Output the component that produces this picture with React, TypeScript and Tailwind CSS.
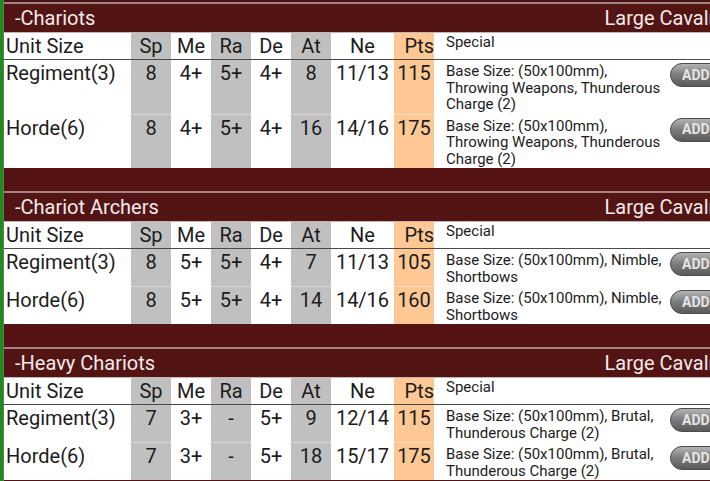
type Row = {
  size: string;
  sp: string;
  me: string;
  ra: string;
  de: string;
  at: string;
  ne: string;
  pts: string;
  special: string;
};

type Unit = { name: string; type: string; rows: Row[] };

const units: Unit[] = [
  {
    name: "-Chariots",
    type: "Large Cavalry",
    rows: [
      { size: "Regiment(3)", sp: "8", me: "4+", ra: "5+", de: "4+", at: "8", ne: "11/13", pts: "115", special: "Base Size: (50x100mm), Throwing Weapons, Thunderous Charge (2)" },
      { size: "Horde(6)", sp: "8", me: "4+", ra: "5+", de: "4+", at: "16", ne: "14/16", pts: "175", special: "Base Size: (50x100mm), Throwing Weapons, Thunderous Charge (2)" },
    ],
  },
  {
    name: "-Chariot Archers",
    type: "Large Cavalry",
    rows: [
      { size: "Regiment(3)", sp: "8", me: "5+", ra: "5+", de: "4+", at: "7", ne: "11/13", pts: "105", special: "Base Size: (50x100mm), Nimble, Shortbows" },
      { size: "Horde(6)", sp: "8", me: "5+", ra: "5+", de: "4+", at: "14", ne: "14/16", pts: "160", special: "Base Size: (50x100mm), Nimble, Shortbows" },
    ],
  },
  {
    name: "-Heavy Chariots",
    type: "Large Cavalry",
    rows: [
      { size: "Regiment(3)", sp: "7", me: "3+", ra: "-", de: "5+", at: "9", ne: "12/14", pts: "115", special: "Base Size: (50x100mm), Brutal, Thunderous Charge (2)" },
      { size: "Horde(6)", sp: "7", me: "3+", ra: "-", de: "5+", at: "18", ne: "15/17", pts: "175", special: "Base Size: (50x100mm), Brutal, Thunderous Charge (2)" },
    ],
  },
];

const grey = "bg-[#c0c0c0]";
const pts = "bg-[#fdc893]";

function AddButton() {
  return (
    <button
      type="button"
      className="mt-[3px] flex h-[24px] w-[60px] items-center rounded-full border border-[#4c4c4c] bg-gradient-to-b from-[#b4b4b4] via-[#7c7c7c] to-[#5a5a5a] pl-[11px] text-[14px] font-bold text-[#e4e4e4]"
    >
      ADD
    </button>
  );
}

function UnitTable({ unit, first }: { unit: Unit; first: boolean }) {
  const body = "px-0 pt-[1px] pb-0 text-center align-top leading-[24px]";
  return (
    <section>
      <div className={first ? "h-[2px] bg-[#4a1414]" : "h-[23px] bg-[#561313]"} />
      <div className="h-[2px] bg-[#a38383]" />
      <div className="flex h-[28px] items-center justify-between bg-[#531414] pl-[11px] pr-[5px] text-[20px] text-[#f3eaea]">
        <span>{unit.name}</span>
        <span>{unit.type}</span>
      </div>
      <div className="h-px bg-[#c9b3b3]" />
      <table className="w-[726px] table-fixed border-collapse bg-white text-[20px] text-[#1c1c1c]">
        <colgroup>
          <col className="w-[127px]" />
          <col className="w-[40px]" />
          <col className="w-[40px]" />
          <col className="w-[40px]" />
          <col className="w-[40px]" />
          <col className="w-[40px]" />
          <col className="w-[63px]" />
          <col className="w-[40px]" />
          <col className="w-[236px]" />
          <col className="w-[60px]" />
        </colgroup>
        <thead>
          <tr className="border-b border-[#4a4a4a] leading-[24px]">
            <th className="py-[1px] pl-[2px] text-left font-normal">Unit Size</th>
            <th className={`${grey} font-normal`}>Sp</th>
            <th className="font-normal">Me</th>
            <th className={`${grey} font-normal`}>Ra</th>
            <th className="font-normal">De</th>
            <th className={`${grey} font-normal`}>At</th>
            <th className="font-normal">Ne</th>
            <th className={`${pts} whitespace-nowrap text-right font-normal`}>Pts</th>
            <th className="pl-[12px] pt-[1px] text-left align-top text-[15px] leading-[16.5px] font-normal">
              Special
            </th>
            <th />
          </tr>
        </thead>
        <tbody>
          {unit.rows.map((r, i) => (
            <tr key={r.size} className={i > 0 ? "border-t border-white/40" : ""}>
              <td className={`${body} whitespace-nowrap pl-[2px] text-left`}>{r.size}</td>
              <td className={`${body} ${grey}`}>{r.sp}</td>
              <td className={body}>{r.me}</td>
              <td className={`${body} ${grey}`}>{r.ra}</td>
              <td className={body}>{r.de}</td>
              <td className={`${body} ${grey}`}>{r.at}</td>
              <td className={body}>{r.ne}</td>
              <td className={`${body} ${pts}`}>{r.pts}</td>
              <td className="pt-[3px] pb-[1px] pl-[12px] pr-[2px] align-top text-[15px] leading-[16.5px]">
                {r.special}
              </td>
              <td className="align-top">
                <AddButton />
              </td>
            </tr>
          ))}
        </tbody>
      </table>
    </section>
  );
}

export default function App() {
  return (
    <div className="flex h-[481px] w-[710px] overflow-hidden bg-[#561313] font-['Roboto',sans-serif]">
      <div className="w-[3px] shrink-0 bg-[#17901a]" />
      <div className="shrink-0 border-l border-[#7a6a6a]">
        {units.map((u, i) => (
          <UnitTable key={u.name} unit={u} first={i === 0} />
        ))}
      </div>
    </div>
  );
}
